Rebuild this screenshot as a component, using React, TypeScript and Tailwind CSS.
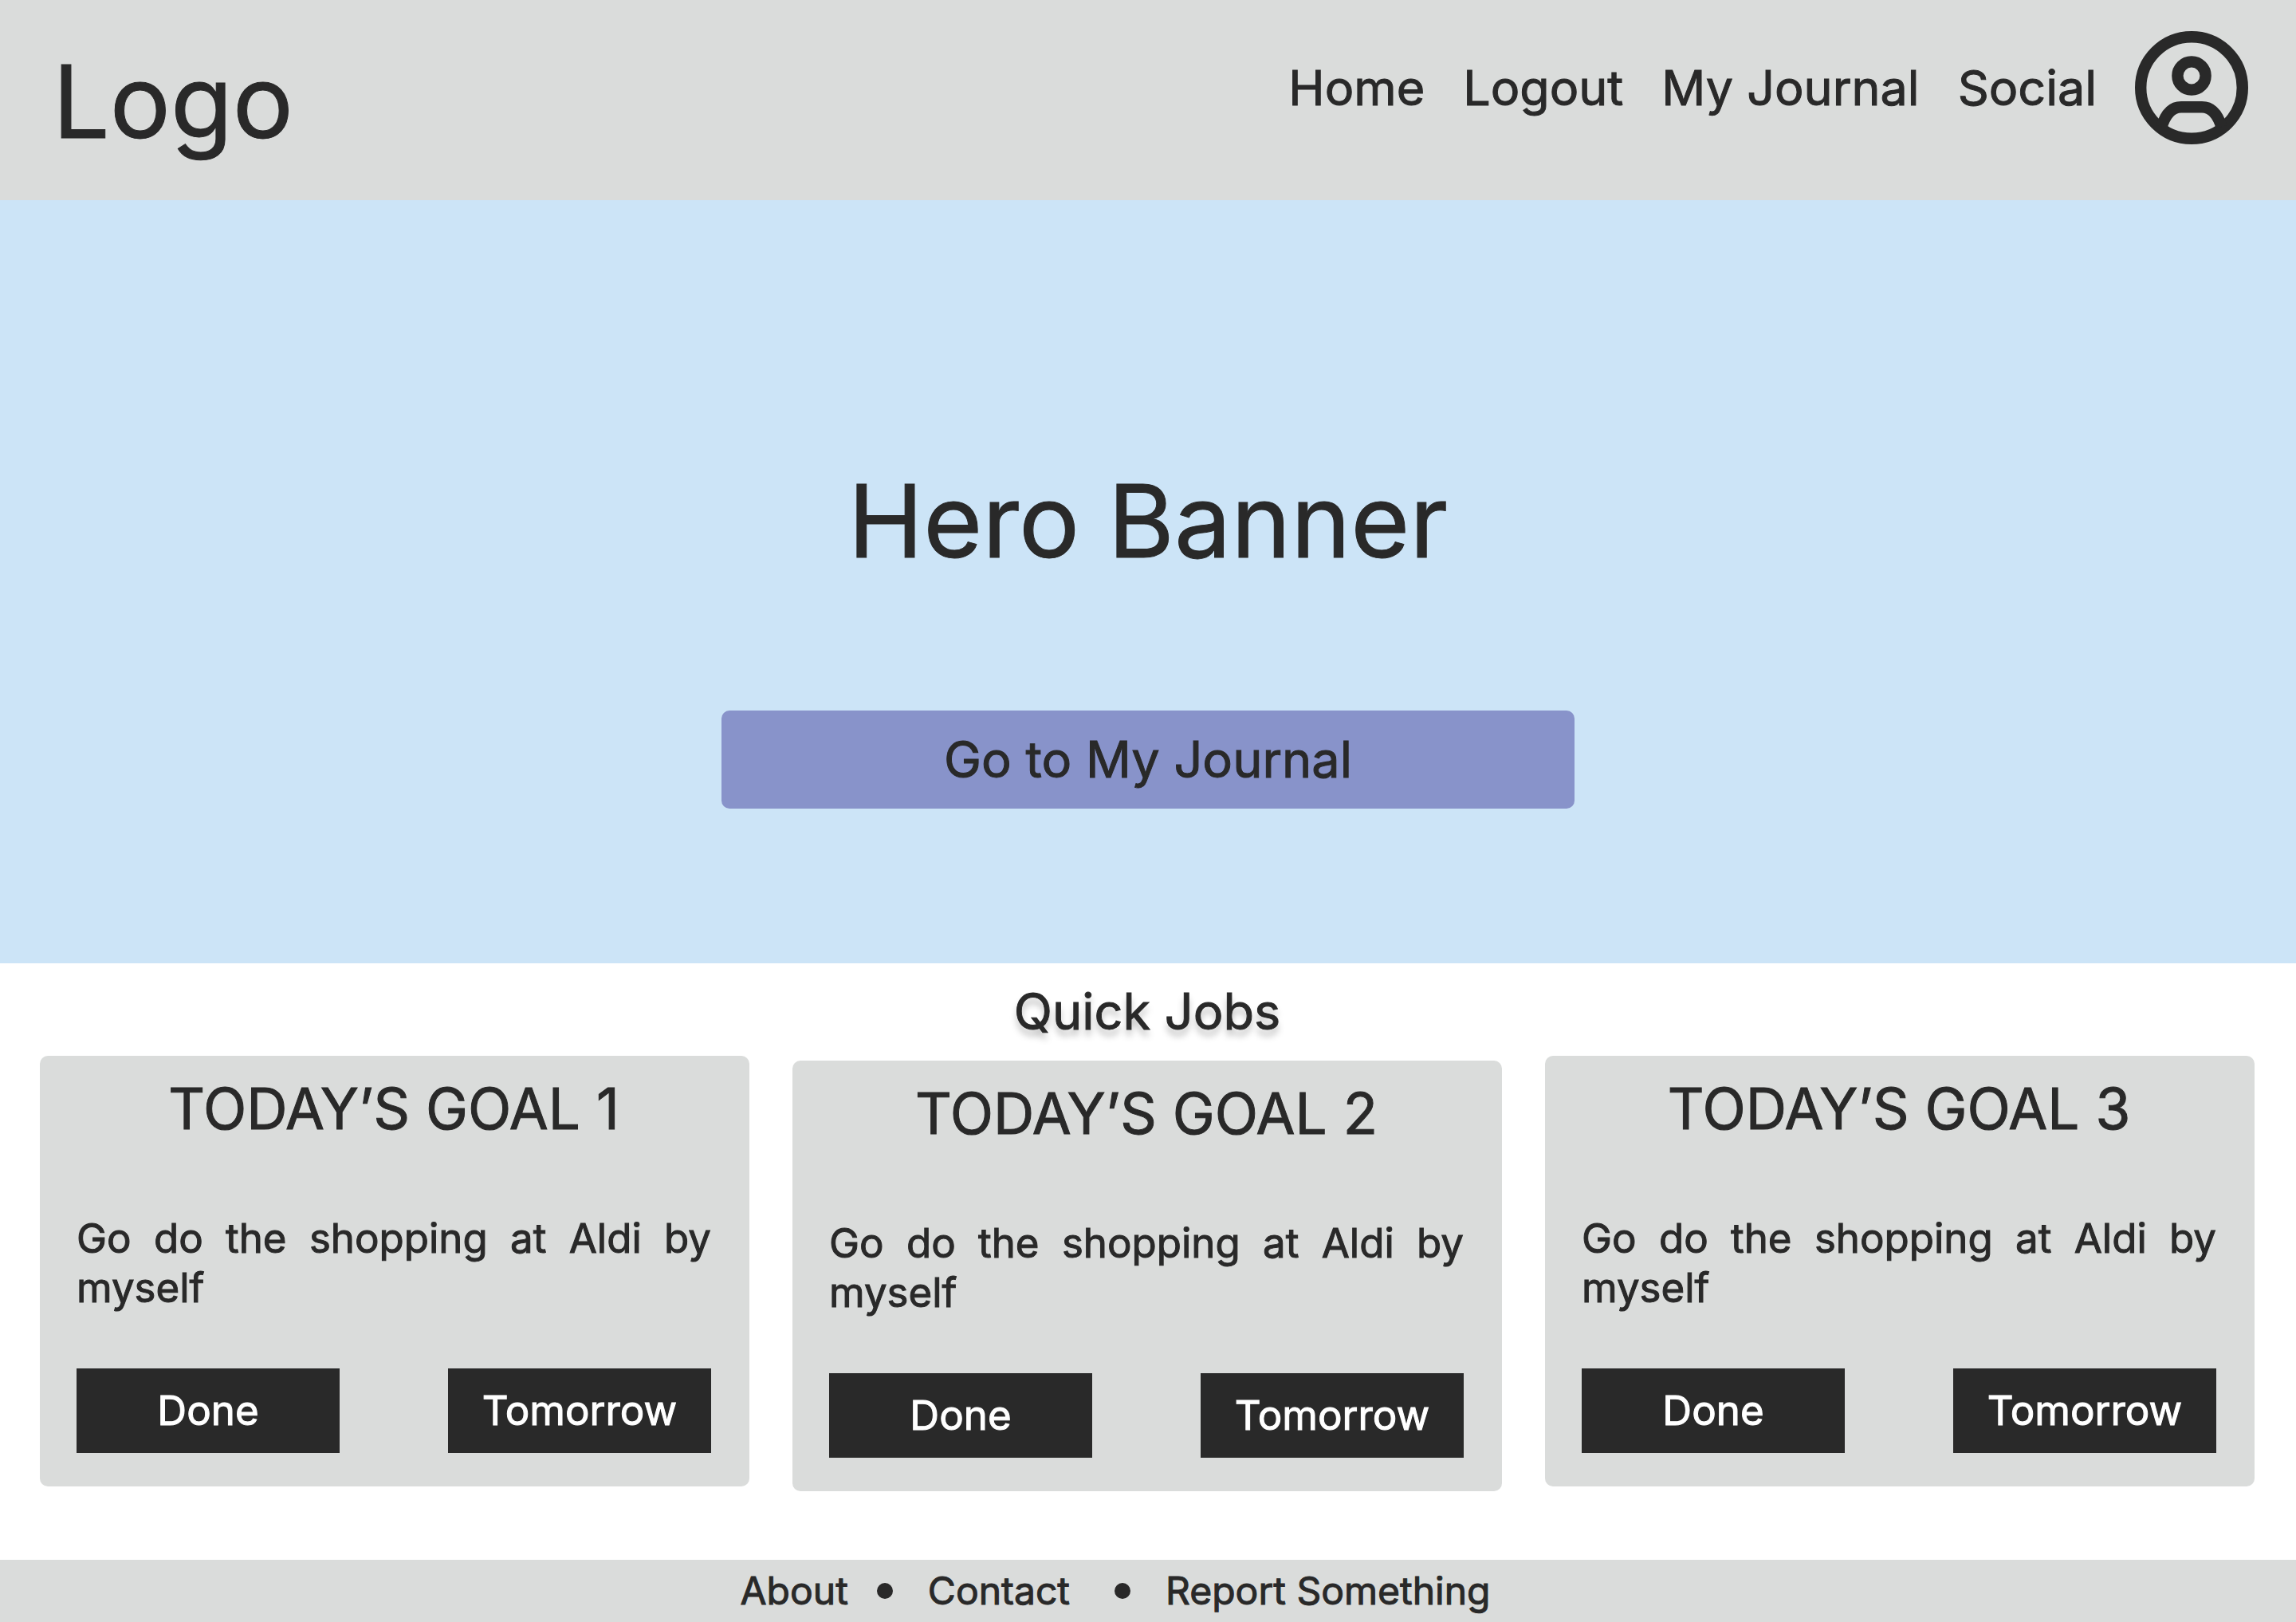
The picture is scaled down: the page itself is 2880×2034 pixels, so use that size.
const goals = [1, 2, 3];

function Avatar() {
  return (
    <svg viewBox="0 0 142 142" className="size-[142px]" fill="none" stroke="#292929" strokeWidth="14.4" aria-hidden="true">
      <circle cx="71" cy="71" r="63.8" />
      <circle cx="71" cy="56" r="17.6" />
      <path d="M33.5 120C38 105 46 95.2 58 95.2H84C96 95.2 104 105 108.5 120" />
    </svg>
  );
}

function GoalCard({ n }: { n: number }) {
  return (
    <article className={`flex h-[540px] flex-col rounded-[10px] bg-[#dadcdb] pt-[22px] pr-12 pl-[46px] ${n === 2 ? "mt-1.5 -mb-1.5" : ""}`}>
      <h3 className="text-center text-[71px] leading-[88px]">TODAY’S GOAL {n}</h3>
      <p className="mt-[88px] text-justify text-[51px] leading-[62px]">Go do the shopping at Aldi by myself</p>
      <div className="mt-[70px] flex justify-between text-[51px] text-white">
        <button className="h-[106px] w-[330px] bg-[#292929]">Done</button>
        <button className="h-[106px] w-[330px] bg-[#292929]">Tomorrow</button>
      </div>
    </article>
  );
}

export default function App() {
  return (
    <div className="flex min-h-screen flex-col bg-white font-['Inter',sans-serif] text-[#292929] [-webkit-text-stroke:1px]">
      <header className="flex h-[251px] items-start justify-between bg-[#dadcdb] pr-[60px] pl-[66px]">
        <a href="#" className="mt-[50px] text-[127px] leading-[154px]">Logo</a>
        <nav className="mt-[39px] flex items-center gap-12 text-[61px] leading-[77px]">
          <a href="#">Home</a>
          <a href="#">Logout</a>
          <a href="#">My Journal</a>
          <a href="#">Social</a>
          <a href="#" aria-label="Profile"><Avatar /></a>
        </nav>
      </header>
      <section className="flex h-[957px] flex-col items-center bg-[#cce4f7] pt-[325px]">
        <h1 className="text-[127px] leading-[154px]">Hero Banner</h1>
        <button className="mt-[161px] h-[123px] w-[1070px] rounded-[10px] bg-[#8893ca] text-[63px]">Go to My Journal</button>
      </section>
      <main className="flex-1 pt-[22px] pr-[52px] pl-[50px]">
        <h2 className="text-center text-[63px] leading-[77px] text-shadow-[0_8px_8px_rgba(0,0,0,0.25)]">Quick Jobs</h2>
        <div className="mt-[17px] grid grid-cols-3 gap-[54px]">
          {goals.map((n) => <GoalCard key={n} n={n} />)}
        </div>
      </main>
      <footer className="flex h-[78px] items-center justify-center bg-[#dadcdb] pr-[82px] text-[48px]">
        <a href="#">About</a>
        <span className="mr-11 ml-9 size-5 rounded-full bg-[#292929]" />
        <a href="#">Contact</a>
        <span className="mr-11 ml-14 size-5 rounded-full bg-[#292929]" />
        <a href="#">Report Something</a>
      </footer>
    </div>
  );
}
